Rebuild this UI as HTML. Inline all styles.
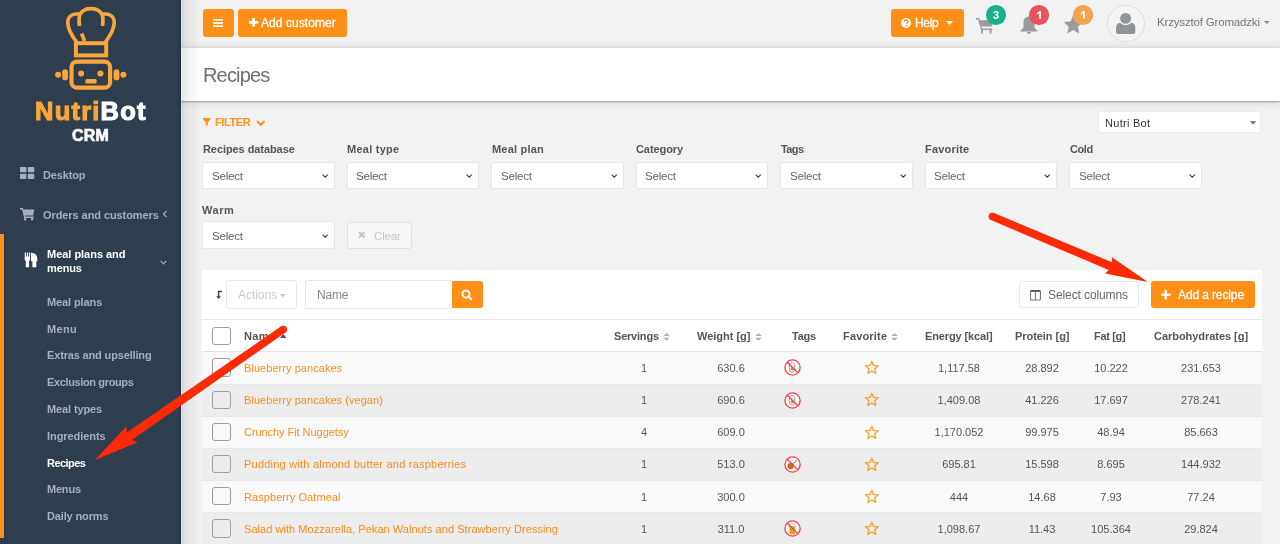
<!DOCTYPE html>
<html><head><meta charset="utf-8">
<style>
*{box-sizing:border-box;margin:0;padding:0}
html,body{width:1280px;height:544px;overflow:hidden;background:#f2f2f2;font-family:"Liberation Sans",sans-serif;position:relative}
.a{position:absolute}
.t{position:absolute;white-space:nowrap;will-change:transform}
svg.a{overflow:visible}
</style></head><body>
<div class="a" style="left:0px;top:0px;width:181px;height:544px;background:#2e3e4e"></div>
<div class="a" style="left:181px;top:0px;width:20px;height:544px;background:linear-gradient(to right,rgba(0,0,0,0.03),rgba(0,0,0,0.1) 1.2px,rgba(0,0,0,0.06) 6px,rgba(0,0,0,0))"></div>
<div class="a" style="left:180px;top:0px;width:1px;height:544px;background:#1f3245"></div>
<svg class="a" style="left:50px;top:0px" width="80" height="95" viewBox="50 0 80 95"><g fill="none" stroke="#f9a63b" stroke-width="3.7" stroke-linecap="round" stroke-linejoin="round">
<path d="M76.5 42 C72 36 67.8 29 67.8 22.5 C67.8 17 71.5 14.2 76 14 L79.5 14"/>
<path stroke-linecap="butt" d="M79.5 26 C78.8 21 78.6 16.5 80.5 13.5 C83 9.8 87 8.6 91 8.6 C95 8.6 99 9.8 101.5 13.5 C103.4 16.5 103.2 21 102.5 26"/>
<path d="M102.5 14 L106 14 C110.5 14.2 114.2 17 114.2 22.5 C114.2 29 110 36 105.5 42"/>
<path stroke-linecap="butt" d="M81.6 33.5 L84.6 41"/>
<rect x="75.9" y="43.2" width="30.3" height="12.2" stroke-width="4" stroke-linecap="butt" stroke-linejoin="miter"/>
<rect x="71.5" y="61.6" width="38.6" height="26.1" rx="5.5" stroke-width="4.2"/>
</g><g fill="#f9a63b">
<circle cx="58.1" cy="74.7" r="3"/><circle cx="123.4" cy="74.7" r="3"/>
<circle cx="81.1" cy="73.4" r="3"/><circle cx="100.4" cy="73.4" r="3"/>
<rect x="62.2" y="69.3" width="5.8" height="11" rx="2.9"/><rect x="113.6" y="69.3" width="5.8" height="11" rx="2.9"/>
<rect x="85.3" y="79.1" width="11.3" height="4.5" rx="1.5"/></g></svg>
<div class="t" style="left:34.50px;top:94.76px;font-size:25.5px;line-height:33px;color:#fff;font-weight:bold;letter-spacing:1.217px;-webkit-text-stroke:1.1px #fff;"><span style="color:#f9a63b;-webkit-text-stroke:1.1px #f9a63b">Nutri</span>Bot</div>
<div class="t" style="left:72.30px;top:125.46px;font-size:16px;line-height:21px;color:#fff;font-weight:bold;letter-spacing:0.145px;-webkit-text-stroke:0.6px #fff;">CRM</div>
<svg class="a" style="left:20px;top:167px" width="14.5" height="12" viewBox="0 0 14.5 12"><g fill="#a6afbf"><rect x="0" y="0" width="6.5" height="5.3" rx="1"/><rect x="7.8" y="0" width="6.5" height="5.3" rx="1"/><rect x="0" y="6.7" width="6.5" height="5.3" rx="1"/><rect x="7.8" y="6.7" width="6.5" height="5.3" rx="1"/></g></svg>
<div class="t" style="left:43.40px;top:167.94px;font-size:11px;line-height:14px;color:#a6afbf;font-weight:bold;letter-spacing:-0.138px;">Desktop</div>
<svg class="a" style="left:20px;top:207.5px" width="15" height="12.5" viewBox="0 0 15 12.5"><g fill="#a6afbf"><path d="M0 0.1 H3 L3.4 1.4 H14.3 L13.2 7.6 H4.9 L5.2 8.6 H13.6 V9.9 H4.1 L2.1 1.5 H0 Z"/><rect x="4" y="10" width="2.2" height="2.4" rx="0.6"/><rect x="11" y="10" width="2.2" height="2.4" rx="0.6"/></g></svg>
<div class="t" style="left:43.00px;top:207.69px;font-size:11px;line-height:14px;color:#a6afbf;font-weight:bold;letter-spacing:-0.077px;">Orders and customers</div>
<svg class="a" style="left:162px;top:210px" width="6" height="8" viewBox="0 0 6 8"><path d="M4.5 1 L1.5 4 L4.5 7" fill="none" stroke="#a6afbf" stroke-width="1.2"/></svg>
<div class="a" style="left:0px;top:234px;width:3.6px;height:304px;background:#fe8f17"></div>
<div class="a" style="left:3.6px;top:234px;width:1px;height:304px;background:#23374b"></div>
<svg class="a" style="left:23.5px;top:251.5px" width="14" height="16" viewBox="0 0 14 16"><g fill="#fff"><path d="M0.7 0.4 H1.9 V4.5 H2.8 V0.4 H4 V4.5 H4.9 V0.4 H6.1 V7 C6.1 8.3 5.3 8.8 5.1 8.8 V15.3 H1.8 V8.8 C1.5 8.8 0.7 8.3 0.7 7 Z"/><path d="M7 0.7 C11 0.7 13.3 3 13.3 7 V9.3 H12.3 V15.3 H8.4 V9.3 H7 Z"/></g></svg>
<div class="t" style="left:46.80px;top:247.39px;font-size:11px;line-height:14px;color:#fff;font-weight:bold;letter-spacing:-0.026px;">Meal plans and</div>
<div class="t" style="left:46.80px;top:260.59px;font-size:11px;line-height:14px;color:#fff;font-weight:bold;letter-spacing:-0.134px;">menus</div>
<svg class="a" style="left:160px;top:259.5px" width="7" height="5" viewBox="0 0 7 5"><path d="M0.7 0.8 L3.5 3.8 L6.3 0.8" fill="none" stroke="#a6afbf" stroke-width="1.2"/></svg>
<div class="t" style="left:46.80px;top:294.79px;font-size:11px;line-height:14px;color:#a6afbf;font-weight:bold;letter-spacing:-0.103px;">Meal plans</div>
<div class="t" style="left:46.80px;top:321.59px;font-size:11px;line-height:14px;color:#a6afbf;font-weight:bold;letter-spacing:0.300px;">Menu</div>
<div class="t" style="left:46.80px;top:348.39px;font-size:11px;line-height:14px;color:#a6afbf;font-weight:bold;letter-spacing:-0.156px;">Extras and upselling</div>
<div class="t" style="left:46.80px;top:375.19px;font-size:11px;line-height:14px;color:#a6afbf;font-weight:bold;letter-spacing:-0.365px;">Exclusion groups</div>
<div class="t" style="left:46.80px;top:401.99px;font-size:11px;line-height:14px;color:#a6afbf;font-weight:bold;letter-spacing:-0.114px;">Meal types</div>
<div class="t" style="left:46.80px;top:428.79px;font-size:11px;line-height:14px;color:#a6afbf;font-weight:bold;letter-spacing:-0.067px;">Ingredients</div>
<div class="t" style="left:46.80px;top:455.59px;font-size:11px;line-height:14px;color:#fff;font-weight:bold;letter-spacing:-0.545px;">Recipes</div>
<div class="t" style="left:46.80px;top:482.39px;font-size:11px;line-height:14px;color:#a6afbf;font-weight:bold;letter-spacing:-0.205px;">Menus</div>
<div class="t" style="left:46.80px;top:509.19px;font-size:11px;line-height:14px;color:#a6afbf;font-weight:bold;letter-spacing:-0.145px;">Daily norms</div>
<div class="a" style="left:181px;top:40px;width:1099px;height:8.3px;background:linear-gradient(rgba(0,0,0,0),rgba(0,0,0,0.035) 80%,rgba(0,0,0,0.07))"></div>
<div class="a" style="left:202.5px;top:9px;width:31px;height:28px;background:#fe8f17;border-radius:3px"></div>
<svg class="a" style="left:213px;top:19px" width="10" height="8" viewBox="0 0 10 8"><g fill="#fff"><rect x="0" y="0" width="10" height="1.7"/><rect x="0" y="3.15" width="10" height="1.7"/><rect x="0" y="6.3" width="10" height="1.7"/></g></svg>
<div class="a" style="left:238px;top:9px;width:109px;height:28px;background:#fe8f17;border-radius:3px"></div>
<svg class="a" style="left:248.5px;top:18.2px" width="9.3" height="8.6" viewBox="0 0 9.3 8.6"><g fill="#fff"><rect x="3.3" y="0" width="2.7" height="8.6"/><rect x="0" y="2.95" width="9.3" height="2.7"/></g></svg>
<div class="t" style="left:260.90px;top:14.64px;font-size:12px;line-height:16px;color:#fff;letter-spacing:0.069px;-webkit-text-stroke:0.3px #fff;">Add customer</div>
<div class="a" style="left:890.5px;top:9px;width:73px;height:28px;background:#fe8f17;border-radius:3px"></div>
<svg class="a" style="left:901.2px;top:17.6px" width="10" height="10" viewBox="0 0 10 10"><circle cx="5" cy="5" r="5" fill="#fff"/><path d="M3.3 3.8 C3.3 2.6 4.1 2 5.1 2 C6.1 2 6.8 2.6 6.8 3.5 C6.8 4.5 5.7 4.7 5.7 5.7" fill="none" stroke="#fe8f17" stroke-width="1.5"/><rect x="4.6" y="6.8" width="1.6" height="1.5" fill="#fe8f17"/></svg>
<div class="t" style="left:914.90px;top:14.94px;font-size:12px;line-height:16px;color:#fff;letter-spacing:-0.302px;-webkit-text-stroke:0.3px #fff;">Help</div>
<svg class="a" style="left:946.3px;top:21px" width="7" height="4" viewBox="0 0 7 4"><path d="M0 0 H7 L3.5 4 Z" fill="#fff"/></svg>
<svg class="a" style="left:976.4px;top:18px" width="18" height="15.5" viewBox="0 0 18 15.5"><g fill="#999c9f"><path d="M0 0 H3.2 L3.8 2.3 H17.6 L16 8.6 H5.5 L6 10.6 H16.2 V12 H4.9 L2.2 1.4 H0 Z"/><rect x="5" y="12" width="1.8" height="3.5"/><rect x="13.6" y="12" width="1.8" height="3.5"/></g></svg>
<svg class="a" style="left:1020px;top:16.3px" width="18" height="18" viewBox="0 0 18 18"><g fill="#999c9f"><path d="M9 0.5 C12.5 0.5 14.5 3 14.5 6.5 V10 C14.5 12 15.8 13.6 17.5 14.6 V15.4 H0.5 V14.6 C2.2 13.6 3.5 12 3.5 10 V6.5 C3.5 3 5.5 0.5 9 0.5 Z"/><path d="M7 16 H11 C11 17.2 10.1 18 9 18 C7.9 18 7 17.2 7 16 Z"/></g></svg>
<svg class="a" style="left:1060px;top:0px" width="30" height="40" viewBox="0 0 30 40"><path fill="#999c9f" stroke="#999c9f" stroke-width="0.6" stroke-linejoin="round" d="M13.30 15.80 L15.92 21.69 L22.34 22.36 L17.55 26.68 L18.88 32.99 L13.30 29.77 L7.72 32.99 L9.05 26.68 L4.26 22.36 L10.68 21.69 Z"/></svg>
<div class="a" style="left:985.6px;top:5.35px;width:20px;height:19.6px;border-radius:50%;background:#1dae8b"></div>
<div class="t" style="left:992.70px;top:8.14px;font-size:11px;line-height:14px;color:#fff;font-weight:bold;">3</div>
<div class="a" style="left:1028.6px;top:5.35px;width:20px;height:19.6px;border-radius:50%;background:#e9515f"></div>
<svg class="a" style="left:1035.6px;top:11.15px" width="6" height="8" viewBox="0 0 6 8"><path d="M3.3 0 H4.9 V7.8 H3.2 V2.1 L1.5 3.4 L0.7 2.3 Z" fill="#fff"/></svg>
<div class="a" style="left:1072.8px;top:5.35px;width:20px;height:19.6px;border-radius:50%;background:#f6a34d"></div>
<svg class="a" style="left:1079.8px;top:11.15px" width="6" height="8" viewBox="0 0 6 8"><path d="M3.3 0 H4.9 V7.8 H3.2 V2.1 L1.5 3.4 L0.7 2.3 Z" fill="#fff"/></svg>
<div class="a" style="left:1107px;top:4.5px;width:38px;height:37.5px;border-radius:50%;border:1px solid #dedede;background:#f4f4f4;box-sizing:border-box"></div>
<svg class="a" style="left:1115px;top:12px" width="22" height="23" viewBox="0 0 22 23"><path fill="#909397" d="M1 16 C1 12.5 3 10.85 6 10.85 H15.3 C18.3 10.85 20.3 12.5 20.3 16 V20 C20.3 21.2 19.5 22 18.3 22 H3 C1.8 22 1 21.2 1 20 Z"/><circle cx="10.6" cy="6.4" r="6.8" fill="#f3f3f3"/><circle cx="10.6" cy="6.4" r="5.4" fill="#909397"/></svg>
<div class="t" style="left:1156.80px;top:14.92px;font-size:11.5px;line-height:15px;color:#777;letter-spacing:-0.173px;">Krzysztof Gromadzki</div>
<svg class="a" style="left:1264.4px;top:20.8px" width="5.5" height="3" viewBox="0 0 5.5 3"><path d="M0 0 H5.5 L2.75 3 Z" fill="#888"/></svg>
<div class="a" style="left:181px;top:48.3px;width:1099px;height:53.1px;background:#fff;box-shadow:0 1px 1.5px rgba(0,0,0,0.3),0 3px 8px rgba(0,0,0,0.09)"></div>
<div class="a" style="left:181px;top:48.3px;width:20px;height:53.1px;background:linear-gradient(to right,rgba(0,0,0,0.03),rgba(0,0,0,0.1) 1.2px,rgba(0,0,0,0.06) 6px,rgba(0,0,0,0))"></div>
<div class="t" style="left:202.70px;top:62.27px;font-size:20px;line-height:26px;color:#707070;letter-spacing:-0.826px;">Recipes</div>
<svg class="a" style="left:202.9px;top:118.2px" width="7.5" height="7.5" viewBox="0 0 7.5 7.5"><path d="M0 0 H7.5 V1.3 L4.8 4.2 V7.5 H2.7 V4.2 L0 1.3 Z" fill="#fe8f17"/></svg>
<div class="t" style="left:215.10px;top:115.39px;font-size:11px;line-height:14px;color:#fe8f17;font-weight:bold;letter-spacing:-0.387px;">FILTER</div>
<svg class="a" style="left:256px;top:119.5px" width="9.5" height="6" viewBox="0 0 9.5 6"><path d="M1 1 L4.75 4.8 L8.5 1" fill="none" stroke="#fe8f17" stroke-width="2"/></svg>
<div class="a" style="left:1097.6px;top:110.9px;width:163.4px;height:22.3px;background:#fff;border:1px solid #e9e9e9;border-radius:3px;box-sizing:border-box"></div>
<div class="t" style="left:1104.80px;top:116.19px;font-size:11px;line-height:14px;color:#333;letter-spacing:0.283px;">Nutri Bot</div>
<svg class="a" style="left:1249.9px;top:120.75px" width="6.2" height="3.8" viewBox="0 0 6.2 3.8"><path d="M0 0 H6.2 L3.1 3.8 Z" fill="#777"/></svg>
<div class="t" style="left:202.80px;top:142.49px;font-size:11px;line-height:14px;color:#555;font-weight:bold;letter-spacing:-0.075px;">Recipes database</div>
<div class="a" style="left:202.4px;top:161.7px;width:132.2px;height:27.8px;background:#fff;border:1px solid #e6e6e6;border-radius:2px;box-sizing:border-box"></div>
<div class="t" style="left:211.50px;top:168.45px;font-size:11.7px;line-height:15px;color:#666;letter-spacing:-0.287px;">Select</div>
<svg class="a" style="left:321.7px;top:174.2px" width="6.4" height="3.8" viewBox="0 0 6.4 3.8"><path d="M0.6 0.6 L3.2 3.2 L5.8 0.6" fill="none" stroke="#3a3a3a" stroke-width="1.05"/></svg>
<div class="t" style="left:347.30px;top:142.49px;font-size:11px;line-height:14px;color:#555;font-weight:bold;letter-spacing:0.249px;">Meal type</div>
<div class="a" style="left:346.9px;top:161.7px;width:132.2px;height:27.8px;background:#fff;border:1px solid #e6e6e6;border-radius:2px;box-sizing:border-box"></div>
<div class="t" style="left:356.00px;top:168.45px;font-size:11.7px;line-height:15px;color:#666;letter-spacing:-0.287px;">Select</div>
<svg class="a" style="left:466.2px;top:174.2px" width="6.4" height="3.8" viewBox="0 0 6.4 3.8"><path d="M0.6 0.6 L3.2 3.2 L5.8 0.6" fill="none" stroke="#3a3a3a" stroke-width="1.05"/></svg>
<div class="t" style="left:491.80px;top:142.49px;font-size:11px;line-height:14px;color:#555;font-weight:bold;letter-spacing:0.200px;">Meal plan</div>
<div class="a" style="left:491.4px;top:161.7px;width:132.2px;height:27.8px;background:#fff;border:1px solid #e6e6e6;border-radius:2px;box-sizing:border-box"></div>
<div class="t" style="left:500.50px;top:168.45px;font-size:11.7px;line-height:15px;color:#666;letter-spacing:-0.287px;">Select</div>
<svg class="a" style="left:610.6999999999999px;top:174.2px" width="6.4" height="3.8" viewBox="0 0 6.4 3.8"><path d="M0.6 0.6 L3.2 3.2 L5.8 0.6" fill="none" stroke="#3a3a3a" stroke-width="1.05"/></svg>
<div class="t" style="left:636.30px;top:142.49px;font-size:11px;line-height:14px;color:#555;font-weight:bold;letter-spacing:-0.080px;">Category</div>
<div class="a" style="left:635.9px;top:161.7px;width:132.2px;height:27.8px;background:#fff;border:1px solid #e6e6e6;border-radius:2px;box-sizing:border-box"></div>
<div class="t" style="left:645.00px;top:168.45px;font-size:11.7px;line-height:15px;color:#666;letter-spacing:-0.287px;">Select</div>
<svg class="a" style="left:755.1999999999999px;top:174.2px" width="6.4" height="3.8" viewBox="0 0 6.4 3.8"><path d="M0.6 0.6 L3.2 3.2 L5.8 0.6" fill="none" stroke="#3a3a3a" stroke-width="1.05"/></svg>
<div class="t" style="left:780.80px;top:142.49px;font-size:11px;line-height:14px;color:#555;font-weight:bold;letter-spacing:-0.580px;">Tags</div>
<div class="a" style="left:780.4px;top:161.7px;width:132.2px;height:27.8px;background:#fff;border:1px solid #e6e6e6;border-radius:2px;box-sizing:border-box"></div>
<div class="t" style="left:789.50px;top:168.45px;font-size:11.7px;line-height:15px;color:#666;letter-spacing:-0.287px;">Select</div>
<svg class="a" style="left:899.6999999999999px;top:174.2px" width="6.4" height="3.8" viewBox="0 0 6.4 3.8"><path d="M0.6 0.6 L3.2 3.2 L5.8 0.6" fill="none" stroke="#3a3a3a" stroke-width="1.05"/></svg>
<div class="t" style="left:925.30px;top:142.49px;font-size:11px;line-height:14px;color:#555;font-weight:bold;letter-spacing:0.189px;">Favorite</div>
<div class="a" style="left:924.9px;top:161.7px;width:132.2px;height:27.8px;background:#fff;border:1px solid #e6e6e6;border-radius:2px;box-sizing:border-box"></div>
<div class="t" style="left:934.00px;top:168.45px;font-size:11.7px;line-height:15px;color:#666;letter-spacing:-0.287px;">Select</div>
<svg class="a" style="left:1044.2px;top:174.2px" width="6.4" height="3.8" viewBox="0 0 6.4 3.8"><path d="M0.6 0.6 L3.2 3.2 L5.8 0.6" fill="none" stroke="#3a3a3a" stroke-width="1.05"/></svg>
<div class="t" style="left:1069.80px;top:142.49px;font-size:11px;line-height:14px;color:#555;font-weight:bold;letter-spacing:-0.406px;">Cold</div>
<div class="a" style="left:1069.4px;top:161.7px;width:132.2px;height:27.8px;background:#fff;border:1px solid #e6e6e6;border-radius:2px;box-sizing:border-box"></div>
<div class="t" style="left:1078.50px;top:168.45px;font-size:11.7px;line-height:15px;color:#666;letter-spacing:-0.287px;">Select</div>
<svg class="a" style="left:1188.7px;top:174.2px" width="6.4" height="3.8" viewBox="0 0 6.4 3.8"><path d="M0.6 0.6 L3.2 3.2 L5.8 0.6" fill="none" stroke="#3a3a3a" stroke-width="1.05"/></svg>
<div class="t" style="left:202.20px;top:202.69px;font-size:11px;line-height:14px;color:#555;font-weight:bold;letter-spacing:0.542px;">Warm</div>
<div class="a" style="left:202.4px;top:221.2px;width:132.2px;height:27.8px;background:#fff;border:1px solid #e6e6e6;border-radius:2px;box-sizing:border-box"></div>
<div class="t" style="left:211.50px;top:227.95px;font-size:11.7px;line-height:15px;color:#666;letter-spacing:-0.287px;">Select</div>
<svg class="a" style="left:321.7px;top:233.7px" width="6.4" height="3.8" viewBox="0 0 6.4 3.8"><path d="M0.6 0.6 L3.2 3.2 L5.8 0.6" fill="none" stroke="#3a3a3a" stroke-width="1.05"/></svg>
<div class="a" style="left:347.4px;top:221.5px;width:64.2px;height:27.2px;background:#f7f7f7;border:1px solid #e0e0e0;border-radius:3px;box-sizing:border-box"></div>
<svg class="a" style="left:358px;top:231px" width="7.5" height="7.5" viewBox="0 0 7.5 7.5"><path d="M1 1 L6.5 6.5 M6.5 1 L1 6.5" stroke="#c6c6c6" stroke-width="2.1"/></svg>
<div class="t" style="left:374.20px;top:227.85px;font-size:11.7px;line-height:15px;color:#c6c6c6;letter-spacing:-0.234px;">Clear</div>
<div class="a" style="left:202px;top:270px;width:1060px;height:280px;background:#fff"></div>
<svg class="a" style="left:215px;top:290px" width="8" height="10" viewBox="0 0 8 10"><path d="M3.6 1 V6.8 M2.9 1.6 H7" fill="none" stroke="#444" stroke-width="1.5"/><path d="M1.2 6.2 H6 L3.6 9 Z" fill="#444"/></svg>
<div class="a" style="left:226.3px;top:280.3px;width:70.5px;height:28.4px;background:#fff;border:1px solid #e8e8e8;border-radius:3px;box-sizing:border-box"></div>
<div class="t" style="left:237.50px;top:286.84px;font-size:12px;line-height:16px;color:#cacaca;letter-spacing:-0.042px;">Actions</div>
<svg class="a" style="left:280.4px;top:293.6px" width="5.8" height="3.4" viewBox="0 0 5.8 3.4"><path d="M0 0 H5.8 L2.9 3.4 Z" fill="#cacaca"/></svg>
<div class="a" style="left:305.3px;top:280.3px;width:147px;height:28.4px;background:#fff;border:1px solid #e8e8e8;border-right:none;border-radius:3px 0 0 3px;box-sizing:border-box"></div>
<div class="t" style="left:316.80px;top:286.84px;font-size:12px;line-height:16px;color:#888;letter-spacing:-0.212px;">Name</div>
<div class="a" style="left:451.5px;top:280.8px;width:31.2px;height:27.4px;background:#fe8f17;border-radius:0 3px 3px 0"></div>
<svg class="a" style="left:461.2px;top:289px" width="11.5" height="11.5" viewBox="0 0 11.5 11.5"><circle cx="5" cy="5" r="3.5" fill="none" stroke="#fff" stroke-width="1.9"/><path d="M7.5 7.5 L10.3 10.3" stroke="#fff" stroke-width="2.2" stroke-linecap="round"/></svg>
<div class="a" style="left:1019.3px;top:280.6px;width:120.1px;height:27.9px;background:#fff;border:1px solid #e8e8e8;border-radius:3px;box-sizing:border-box"></div>
<svg class="a" style="left:1030px;top:289.5px" width="11" height="10.5" viewBox="0 0 11 10.5"><rect x="0.55" y="0.9" width="9.9" height="9.05" rx="1" fill="none" stroke="#777" stroke-width="1.1"/><path d="M5.5 0.9 V9.95" stroke="#777" stroke-width="1"/><path d="M0.6 0.9 H10.4" stroke="#555" stroke-width="1.8"/></svg>
<div class="t" style="left:1048.00px;top:286.84px;font-size:12px;line-height:16px;color:#666;letter-spacing:-0.098px;">Select columns</div>
<div class="a" style="left:1150.7px;top:280.8px;width:104px;height:27.4px;background:#fe8f17;border-radius:3px"></div>
<svg class="a" style="left:1160.8px;top:289.5px" width="9.5" height="9.5" viewBox="0 0 9.5 9.5"><g fill="#fff"><rect x="3.6" y="0" width="2.3" height="9.5"/><rect x="0" y="3.6" width="9.5" height="2.3"/></g></svg>
<div class="t" style="left:1177.70px;top:286.84px;font-size:12px;line-height:16px;color:#fff;letter-spacing:-0.118px;-webkit-text-stroke:0.3px #fff;">Add a recipe</div>
<div class="a" style="left:202px;top:319px;width:1060px;height:1px;background:#e8e8e8"></div>
<div class="a" style="left:212px;top:326.5px;width:18.5px;height:18.5px;border:1px solid #9e9e9e;border-radius:3px;box-sizing:border-box"></div>
<div class="t" style="left:244.20px;top:329.19px;font-size:11px;line-height:14px;color:#555;font-weight:bold;letter-spacing:0.386px;">Name</div>
<svg class="a" style="left:280px;top:333.5px" width="6.5" height="4" viewBox="0 0 6.5 4"><path d="M0 4 L3.25 0 L6.5 4 Z" fill="#555"/></svg>
<div class="t" style="left:614.40px;top:329.19px;font-size:11px;line-height:14px;color:#555;font-weight:bold;letter-spacing:-0.207px;">Servings</div>
<div class="t" style="left:696.70px;top:329.19px;font-size:11px;line-height:14px;color:#555;font-weight:bold;letter-spacing:-0.011px;">Weight [g]</div>
<div class="t" style="left:792.20px;top:329.19px;font-size:11px;line-height:14px;color:#555;font-weight:bold;letter-spacing:-0.247px;">Tags</div>
<div class="t" style="left:842.80px;top:329.19px;font-size:11px;line-height:14px;color:#555;font-weight:bold;letter-spacing:0.175px;">Favorite</div>
<div class="t" style="left:924.50px;top:329.19px;font-size:11px;line-height:14px;color:#555;font-weight:bold;letter-spacing:-0.127px;">Energy [kcal]</div>
<div class="t" style="left:1015.30px;top:329.19px;font-size:11px;line-height:14px;color:#555;font-weight:bold;letter-spacing:-0.053px;">Protein [g]</div>
<div class="t" style="left:1094.40px;top:329.19px;font-size:11px;line-height:14px;color:#555;font-weight:bold;letter-spacing:-0.323px;">Fat [g]</div>
<div class="t" style="left:1153.90px;top:329.19px;font-size:11px;line-height:14px;color:#555;font-weight:bold;letter-spacing:-0.042px;">Carbohydrates [g]</div>
<svg class="a" style="left:663.0px;top:332.8px" width="7" height="8" viewBox="0 0 7 8"><path d="M0.2 3.1 L3.5 0 L6.8 3.1 Z M0.2 4.7 L3.5 7.8 L6.8 4.7 Z" fill="#b0b0b0"/></svg>
<svg class="a" style="left:754.9px;top:332.8px" width="7" height="8" viewBox="0 0 7 8"><path d="M0.2 3.1 L3.5 0 L6.8 3.1 Z M0.2 4.7 L3.5 7.8 L6.8 4.7 Z" fill="#b0b0b0"/></svg>
<svg class="a" style="left:890.8000000000001px;top:332.8px" width="7" height="8" viewBox="0 0 7 8"><path d="M0.2 3.1 L3.5 0 L6.8 3.1 Z M0.2 4.7 L3.5 7.8 L6.8 4.7 Z" fill="#b0b0b0"/></svg>
<div class="a" style="left:202px;top:351px;width:1060px;height:1px;background:#e4e4e4"></div>
<div class="a" style="left:202px;top:351.5px;width:1060px;height:32.15px;background:#f9f9f9"></div>
<div class="a" style="left:212px;top:358.38px;width:18.5px;height:18.5px;border:1px solid #9e9e9e;border-radius:3px;box-sizing:border-box"></div>
<div class="t" style="left:244.00px;top:360.99px;font-size:11px;line-height:14px;color:#fb8c1c;letter-spacing:0.052px;">Blueberry pancakes</div>
<div class="t" style="left:583.90px;width:120px;text-align:center;top:360.99px;font-size:11px;line-height:14px;color:#555">1</div>
<div class="t" style="left:670.90px;width:120px;text-align:center;top:360.99px;font-size:11px;line-height:14px;color:#555">630.6</div>
<div class="t" style="left:898.50px;width:120px;text-align:center;top:360.99px;font-size:11px;line-height:14px;color:#555">1,117.58</div>
<div class="t" style="left:982.30px;width:120px;text-align:center;top:360.99px;font-size:11px;line-height:14px;color:#555">28.892</div>
<div class="t" style="left:1050.60px;width:120px;text-align:center;top:360.99px;font-size:11px;line-height:14px;color:#555">10.222</div>
<div class="t" style="left:1141.20px;width:120px;text-align:center;top:360.99px;font-size:11px;line-height:14px;color:#555">231.653</div>
<svg class="a" style="left:783.5px;top:359.47px" width="17" height="17" viewBox="0 0 17 17"><circle cx="8.5" cy="8.5" r="7.6" fill="#fff" stroke="#fb3b4b" stroke-width="1.3"/><ellipse cx="8" cy="8.3" rx="2.8" ry="5" fill="none" stroke="#9aa0a6" stroke-width="1"/><ellipse cx="8" cy="8.6" rx="1.7" ry="3.4" fill="none" stroke="#c9cdd1" stroke-width="0.7"/><circle cx="8.2" cy="9.8" r="1.5" fill="#f08a00"/><path d="M3.3 3.3 L13.5 13.5" stroke="#fb3b4b" stroke-width="1.3"/></svg>
<svg class="a" style="left:864.2px;top:360.27px" width="15.6" height="14.8" viewBox="0 0 16 15"><path d="M8 1.2 L9.9 5.5 L14.6 5.9 L11 9 L12.1 13.7 L8 11.2 L3.9 13.7 L5 9 L1.4 5.9 L6.1 5.5 Z" fill="none" stroke="#f9a12b" stroke-width="1.35" stroke-linejoin="round"/></svg>
<div class="a" style="left:202px;top:383.65px;width:1060px;height:32.15px;background:#ededed"></div>
<div class="a" style="left:202px;top:383.85px;width:1060px;height:1px;background:#e7e8ea"></div>
<div class="a" style="left:212px;top:390.52px;width:18.5px;height:18.5px;border:1px solid #9e9e9e;border-radius:3px;box-sizing:border-box"></div>
<div class="t" style="left:244.00px;top:393.14px;font-size:11px;line-height:14px;color:#fb8c1c;letter-spacing:0.052px;">Blueberry pancakes (vegan)</div>
<div class="t" style="left:583.90px;width:120px;text-align:center;top:393.14px;font-size:11px;line-height:14px;color:#555">1</div>
<div class="t" style="left:670.90px;width:120px;text-align:center;top:393.14px;font-size:11px;line-height:14px;color:#555">690.6</div>
<div class="t" style="left:898.50px;width:120px;text-align:center;top:393.14px;font-size:11px;line-height:14px;color:#555">1,409.08</div>
<div class="t" style="left:982.30px;width:120px;text-align:center;top:393.14px;font-size:11px;line-height:14px;color:#555">41.226</div>
<div class="t" style="left:1050.60px;width:120px;text-align:center;top:393.14px;font-size:11px;line-height:14px;color:#555">17.697</div>
<div class="t" style="left:1141.20px;width:120px;text-align:center;top:393.14px;font-size:11px;line-height:14px;color:#555">278.241</div>
<svg class="a" style="left:783.5px;top:391.62px" width="17" height="17" viewBox="0 0 17 17"><circle cx="8.5" cy="8.5" r="7.6" fill="#fff" stroke="#fb3b4b" stroke-width="1.3"/><ellipse cx="8" cy="8.3" rx="2.8" ry="5" fill="none" stroke="#9aa0a6" stroke-width="1"/><ellipse cx="8" cy="8.6" rx="1.7" ry="3.4" fill="none" stroke="#c9cdd1" stroke-width="0.7"/><circle cx="8.2" cy="9.8" r="1.5" fill="#f08a00"/><path d="M3.3 3.3 L13.5 13.5" stroke="#fb3b4b" stroke-width="1.3"/></svg>
<svg class="a" style="left:864.2px;top:392.42px" width="15.6" height="14.8" viewBox="0 0 16 15"><path d="M8 1.2 L9.9 5.5 L14.6 5.9 L11 9 L12.1 13.7 L8 11.2 L3.9 13.7 L5 9 L1.4 5.9 L6.1 5.5 Z" fill="none" stroke="#f9a12b" stroke-width="1.35" stroke-linejoin="round"/></svg>
<div class="a" style="left:202px;top:415.8px;width:1060px;height:32.15px;background:#f9f9f9"></div>
<div class="a" style="left:202px;top:416.0px;width:1060px;height:1px;background:#e7e8ea"></div>
<div class="a" style="left:212px;top:422.68px;width:18.5px;height:18.5px;border:1px solid #9e9e9e;border-radius:3px;box-sizing:border-box"></div>
<div class="t" style="left:244.00px;top:425.29px;font-size:11px;line-height:14px;color:#fb8c1c;letter-spacing:-0.056px;">Crunchy Fit Nuggetsy</div>
<div class="t" style="left:583.90px;width:120px;text-align:center;top:425.29px;font-size:11px;line-height:14px;color:#555">4</div>
<div class="t" style="left:670.90px;width:120px;text-align:center;top:425.29px;font-size:11px;line-height:14px;color:#555">609.0</div>
<div class="t" style="left:898.50px;width:120px;text-align:center;top:425.29px;font-size:11px;line-height:14px;color:#555">1,170.052</div>
<div class="t" style="left:982.30px;width:120px;text-align:center;top:425.29px;font-size:11px;line-height:14px;color:#555">99.975</div>
<div class="t" style="left:1050.60px;width:120px;text-align:center;top:425.29px;font-size:11px;line-height:14px;color:#555">48.94</div>
<div class="t" style="left:1141.20px;width:120px;text-align:center;top:425.29px;font-size:11px;line-height:14px;color:#555">85.663</div>
<svg class="a" style="left:864.2px;top:424.57px" width="15.6" height="14.8" viewBox="0 0 16 15"><path d="M8 1.2 L9.9 5.5 L14.6 5.9 L11 9 L12.1 13.7 L8 11.2 L3.9 13.7 L5 9 L1.4 5.9 L6.1 5.5 Z" fill="none" stroke="#f9a12b" stroke-width="1.35" stroke-linejoin="round"/></svg>
<div class="a" style="left:202px;top:447.95px;width:1060px;height:32.15px;background:#ededed"></div>
<div class="a" style="left:202px;top:448.15px;width:1060px;height:1px;background:#e7e8ea"></div>
<div class="a" style="left:212px;top:454.82px;width:18.5px;height:18.5px;border:1px solid #9e9e9e;border-radius:3px;box-sizing:border-box"></div>
<div class="t" style="left:244.00px;top:457.44px;font-size:11px;line-height:14px;color:#fb8c1c;letter-spacing:0.227px;">Pudding with almond butter and raspberries</div>
<div class="t" style="left:583.90px;width:120px;text-align:center;top:457.44px;font-size:11px;line-height:14px;color:#555">1</div>
<div class="t" style="left:670.90px;width:120px;text-align:center;top:457.44px;font-size:11px;line-height:14px;color:#555">513.0</div>
<div class="t" style="left:898.50px;width:120px;text-align:center;top:457.44px;font-size:11px;line-height:14px;color:#555">695.81</div>
<div class="t" style="left:982.30px;width:120px;text-align:center;top:457.44px;font-size:11px;line-height:14px;color:#555">15.598</div>
<div class="t" style="left:1050.60px;width:120px;text-align:center;top:457.44px;font-size:11px;line-height:14px;color:#555">8.695</div>
<div class="t" style="left:1141.20px;width:120px;text-align:center;top:457.44px;font-size:11px;line-height:14px;color:#555">144.932</div>
<svg class="a" style="left:783.5px;top:455.92px" width="17" height="17" viewBox="0 0 17 17"><circle cx="8.5" cy="8.5" r="7.6" fill="#fff" stroke="#fb3b4b" stroke-width="1.3"/><path d="M7.5 9.3 L11.8 5.3" stroke="#a9aeb3" stroke-width="1.5" stroke-linecap="round"/><circle cx="12" cy="5" r="1.2" fill="#b9bec3"/><circle cx="6.6" cy="10.1" r="2.9" fill="#c0701a" stroke="#8a5a2a" stroke-width="0.5"/><path d="M3.3 3.3 L13.5 13.5" stroke="#fb3b4b" stroke-width="1.3"/></svg>
<svg class="a" style="left:864.2px;top:456.72px" width="15.6" height="14.8" viewBox="0 0 16 15"><path d="M8 1.2 L9.9 5.5 L14.6 5.9 L11 9 L12.1 13.7 L8 11.2 L3.9 13.7 L5 9 L1.4 5.9 L6.1 5.5 Z" fill="none" stroke="#f9a12b" stroke-width="1.35" stroke-linejoin="round"/></svg>
<div class="a" style="left:202px;top:480.1px;width:1060px;height:32.15px;background:#f9f9f9"></div>
<div class="a" style="left:202px;top:480.3px;width:1060px;height:1px;background:#e7e8ea"></div>
<div class="a" style="left:212px;top:486.98px;width:18.5px;height:18.5px;border:1px solid #9e9e9e;border-radius:3px;box-sizing:border-box"></div>
<div class="t" style="left:244.00px;top:489.59px;font-size:11px;line-height:14px;color:#fb8c1c;letter-spacing:0.067px;">Raspberry Oatmeal</div>
<div class="t" style="left:583.90px;width:120px;text-align:center;top:489.59px;font-size:11px;line-height:14px;color:#555">1</div>
<div class="t" style="left:670.90px;width:120px;text-align:center;top:489.59px;font-size:11px;line-height:14px;color:#555">300.0</div>
<div class="t" style="left:898.50px;width:120px;text-align:center;top:489.59px;font-size:11px;line-height:14px;color:#555">444</div>
<div class="t" style="left:982.30px;width:120px;text-align:center;top:489.59px;font-size:11px;line-height:14px;color:#555">14.68</div>
<div class="t" style="left:1050.60px;width:120px;text-align:center;top:489.59px;font-size:11px;line-height:14px;color:#555">7.93</div>
<div class="t" style="left:1141.20px;width:120px;text-align:center;top:489.59px;font-size:11px;line-height:14px;color:#555">77.24</div>
<svg class="a" style="left:864.2px;top:488.88px" width="15.6" height="14.8" viewBox="0 0 16 15"><path d="M8 1.2 L9.9 5.5 L14.6 5.9 L11 9 L12.1 13.7 L8 11.2 L3.9 13.7 L5 9 L1.4 5.9 L6.1 5.5 Z" fill="none" stroke="#f9a12b" stroke-width="1.35" stroke-linejoin="round"/></svg>
<div class="a" style="left:202px;top:512.25px;width:1060px;height:32.15px;background:#ededed"></div>
<div class="a" style="left:202px;top:512.45px;width:1060px;height:1px;background:#e7e8ea"></div>
<div class="a" style="left:212px;top:519.12px;width:18.5px;height:18.5px;border:1px solid #9e9e9e;border-radius:3px;box-sizing:border-box"></div>
<div class="t" style="left:244.00px;top:521.74px;font-size:11px;line-height:14px;color:#fb8c1c;letter-spacing:0.051px;">Salad with Mozzarella, Pekan Walnuts and Strawberry Dressing</div>
<div class="t" style="left:583.90px;width:120px;text-align:center;top:521.74px;font-size:11px;line-height:14px;color:#555">1</div>
<div class="t" style="left:670.90px;width:120px;text-align:center;top:521.74px;font-size:11px;line-height:14px;color:#555">311.0</div>
<div class="t" style="left:898.50px;width:120px;text-align:center;top:521.74px;font-size:11px;line-height:14px;color:#555">1,098.67</div>
<div class="t" style="left:982.30px;width:120px;text-align:center;top:521.74px;font-size:11px;line-height:14px;color:#555">11.43</div>
<div class="t" style="left:1050.60px;width:120px;text-align:center;top:521.74px;font-size:11px;line-height:14px;color:#555">105.364</div>
<div class="t" style="left:1141.20px;width:120px;text-align:center;top:521.74px;font-size:11px;line-height:14px;color:#555">29.824</div>
<svg class="a" style="left:783.5px;top:520.23px" width="17" height="17" viewBox="0 0 17 17"><circle cx="8.5" cy="8.5" r="7.6" fill="#fff" stroke="#fb3b4b" stroke-width="1.3"/><path d="M5.3 3.2 H11.3 L10.9 14.3 H5.7 Z" fill="#eef0f2" stroke="#b8bcc0" stroke-width="0.6"/><path d="M5.5 6.2 H11.1 L10.9 14.1 H5.9 Z" fill="#e2a30a"/><path d="M3.3 3.3 L13.5 13.5" stroke="#fb3b4b" stroke-width="1.3"/></svg>
<svg class="a" style="left:864.2px;top:521.03px" width="15.6" height="14.8" viewBox="0 0 16 15"><path d="M8 1.2 L9.9 5.5 L14.6 5.9 L11 9 L12.1 13.7 L8 11.2 L3.9 13.7 L5 9 L1.4 5.9 L6.1 5.5 Z" fill="none" stroke="#f9a12b" stroke-width="1.35" stroke-linejoin="round"/></svg>
<svg class="a" style="left:0px;top:0px" width="1280" height="544" viewBox="0 0 1280 544"><path d="M285.41 332.44 L131.86 440.05 L137.70 442.33 L94.60 460.30 L126.53 426.22 L126.62 432.49 L281.19 326.36 Z" fill="#fc2a06"/><circle cx="283.3" cy="329.4" r="3.7" fill="#fc2a06"/><path d="M993.87 213.00 L1112.02 262.25 L1111.96 257.24 L1147.90 281.90 L1105.13 273.46 L1108.76 270.00 L990.93 220.00 Z" fill="#fc2a06"/><circle cx="992.4" cy="216.5" r="3.8" fill="#fc2a06"/></svg>
</body></html>
